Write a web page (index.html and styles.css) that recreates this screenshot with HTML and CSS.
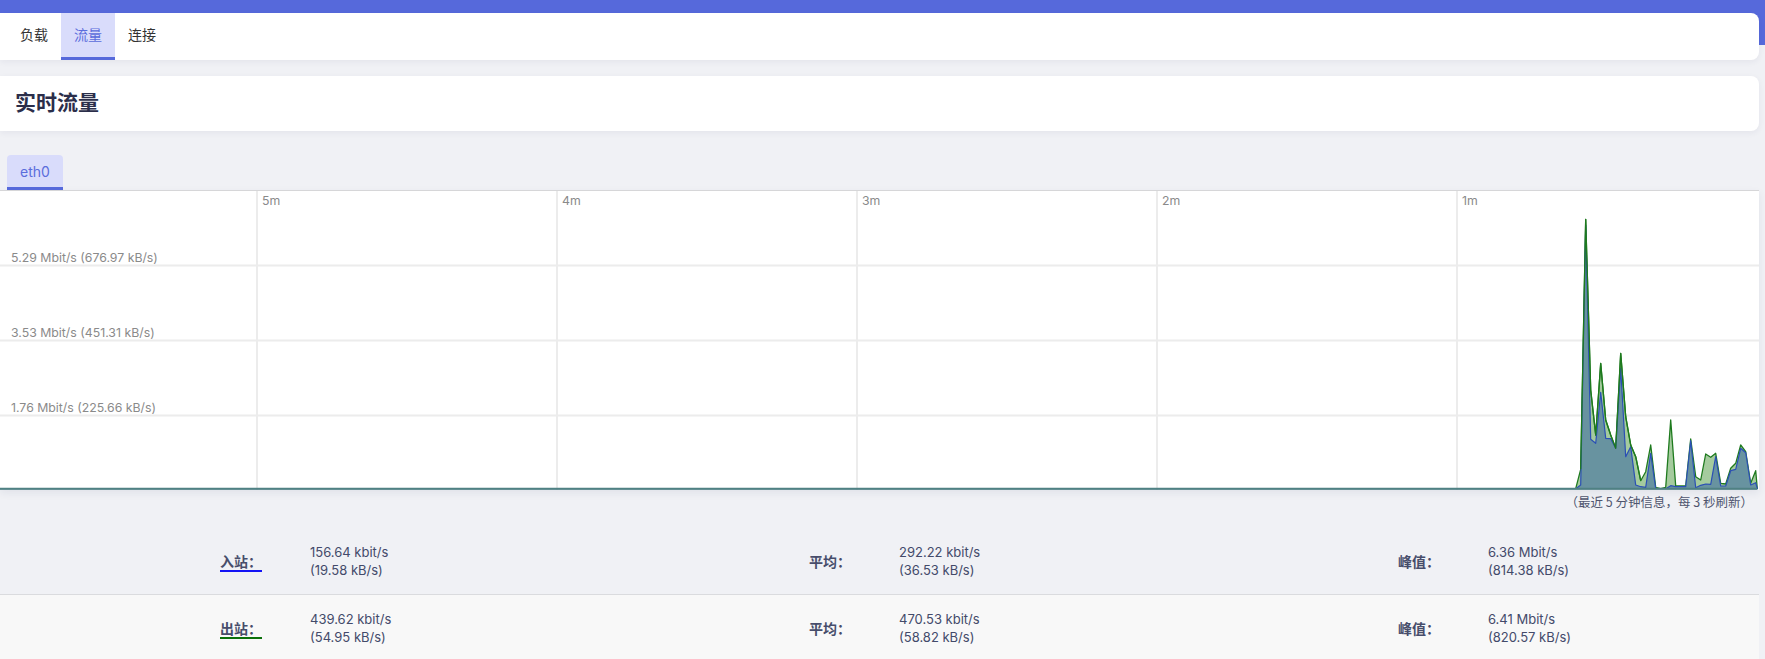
FILE: index.html
```html
<!DOCTYPE html>
<html lang="zh-CN">
<head>
<meta charset="utf-8">
<title>实时流量</title>
<link rel="stylesheet" href="styles.css">
</head>
<body>
<div class="page">
  <nav class="tabs-card">
    <a class="tab">负载</a>
    <a class="tab active">流量</a>
    <a class="tab">连接</a>
  </nav>

  <div class="title-card">
    <h2 class="title">实时流量</h2>
  </div>

  <div class="iface-tabs">
    <span class="iface-tab">eth0</span>
  </div>

  <div class="chart-box">
    <svg class="chart" width="1759" height="299" viewBox="0 0 1759 299" xmlns="http://www.w3.org/2000/svg">
      <g stroke="#ececec" stroke-width="2">
        <line x1="257" y1="0" x2="257" y2="299"/>
        <line x1="557" y1="0" x2="557" y2="299"/>
        <line x1="857" y1="0" x2="857" y2="299"/>
        <line x1="1157" y1="0" x2="1157" y2="299"/>
        <line x1="1457" y1="0" x2="1457" y2="299"/>
        <line x1="0" y1="74.5" x2="1759" y2="74.5"/>
        <line x1="0" y1="149.5" x2="1759" y2="149.5"/>
        <line x1="0" y1="224.5" x2="1759" y2="224.5"/>
      </g>
      <g class="axis">
        <text x="262" y="14">5m</text>
        <text x="562" y="14">4m</text>
        <text x="862" y="14">3m</text>
        <text x="1162" y="14">2m</text>
        <text x="1462" y="14">1m</text>
        <text x="11" y="71">5.29 Mbit/s (676.97 kB/s)</text>
        <text x="11" y="146">3.53 Mbit/s (451.31 kB/s)</text>
        <text x="11" y="221">1.76 Mbit/s (225.66 kB/s)</text>
      </g>
      <polygon fill="#a5cb9e" stroke="#1e7a1e" stroke-width="1.3" stroke-linejoin="round"
        points="0,297.7 1575.7,297.7 1580.7,278.3 1585.7,28.3 1590.7,199 1595.7,244 1600.7,172.3 1605.7,229 1610.7,244 1615.7,257.3 1620.7,162.3 1625.7,225.7 1630.7,254 1635.7,265.7 1640.7,289.7 1645.7,280.7 1650.7,254 1655.7,296.3 1660.7,297.7 1665.7,296.3 1670.7,229 1675.7,295 1680.7,295 1685.7,295 1690.7,248 1695.7,285.7 1700.7,289 1705.7,263 1710.7,266.3 1715.7,262.3 1720.7,292.3 1725.7,293 1730.7,277.3 1735.7,272.3 1740.7,254 1745.7,260.7 1750.7,292.3 1755.7,279.7 1757.3,297.7"/>
      <polygon fill="#6893a0" stroke="#2b4fb5" stroke-width="1.2" stroke-linejoin="round"
        points="0,297.7 1575.7,297.7 1580.7,294 1585.7,34 1590.7,248.3 1595.7,252.3 1600.7,201.3 1605.7,247.3 1610.7,247.7 1615.7,257.3 1620.7,177.3 1625.7,265.7 1630.7,255.7 1635.7,294 1640.7,295.7 1645.7,296.3 1650.7,262.3 1655.7,297.7 1660.7,297.7 1665.7,297.7 1670.7,294.7 1675.7,295.7 1680.7,295.7 1685.7,295.7 1690.7,249.7 1695.7,296.7 1700.7,294.3 1705.7,293 1710.7,293.3 1715.7,265.7 1720.7,295 1725.7,295 1730.7,279.7 1735.7,278.3 1740.7,257.3 1745.7,261.7 1750.7,294 1755.7,291.7 1757.3,297.7"/>
      <polyline fill="none" stroke="#1e7a1e" stroke-width="1.3" stroke-linejoin="round"
        points="1580.7,278.3 1585.7,28.3 1590.7,199 1595.7,244 1600.7,172.3 1605.7,229 1610.7,244 1615.7,257.3 1620.7,162.3 1625.7,225.7 1630.7,254 1635.7,265.7 1640.7,289.7"/>
      <line x1="0" y1="297.8" x2="1757" y2="297.8" stroke="#4f8183" stroke-width="2"/>
    </svg>
  </div>

  <div class="note">（最近 5 分钟信息，每 3 秒刷新）</div>

  <div class="stats">
    <div class="stats-row">
      <div class="cell-label"><span class="lbl lbl-rx">入站：</span></div>
      <div class="cell-value">156.64 kbit/s<br>(19.58 kB/s)</div>
      <div class="cell-label"><span class="lbl">平均：</span></div>
      <div class="cell-value">292.22 kbit/s<br>(36.53 kB/s)</div>
      <div class="cell-label"><span class="lbl">峰值：</span></div>
      <div class="cell-value">6.36 Mbit/s<br>(814.38 kB/s)</div>
    </div>
    <div class="stats-row alt">
      <div class="cell-label"><span class="lbl lbl-tx">出站：</span></div>
      <div class="cell-value">439.62 kbit/s<br>(54.95 kB/s)</div>
      <div class="cell-label"><span class="lbl">平均：</span></div>
      <div class="cell-value">470.53 kbit/s<br>(58.82 kB/s)</div>
      <div class="cell-label"><span class="lbl">峰值：</span></div>
      <div class="cell-value">6.41 Mbit/s<br>(820.57 kB/s)</div>
    </div>
  </div>
</div>
</body>
</html>
```

FILE: styles.css
```css
html, body {
  margin: 0;
  padding: 0;
}

body {
  background: linear-gradient(#5669db 0, #5669db 45px, #f0f1f5 45px);
  background-color: #f0f1f5;
  font-family: Inter, "Noto Sans CJK SC", sans-serif;
  color: #333;
  min-height: 659px;
  overflow: hidden;
}

.page {
  padding: 13px 6px 0 0;
}

.tabs-card {
  display: flex;
  height: 47px;
  padding-left: 7px;
  background: #fff;
  border-radius: 0 8px 8px 0;
  box-shadow: 0 2px 6px rgba(30, 40, 80, 0.06);
}

.tab {
  display: flex;
  align-items: center;
  padding: 0 13px 2px;
  height: 42px;
  border-bottom: 3px solid transparent;
  font-family: "Noto Sans CJK SC", sans-serif;
  font-size: 14px;
  color: #333;
}

.tab.active {
  background: #d9dcfb;
  color: #5b6ddc;
  border-bottom-color: #5669db;
}

.title-card {
  margin-top: 16px;
  height: 55px;
  box-sizing: border-box;
  display: flex;
  align-items: center;
  padding: 0 0 6px 15px;
  background: #fff;
  border-radius: 0 8px 8px 0;
  box-shadow: 0 2px 6px rgba(30, 40, 80, 0.06);
}

.title {
  margin: 0;
  font-family: "Noto Sans CJK SC", sans-serif;
  font-size: 21px;
  line-height: 26px;
  font-weight: 700;
  color: #2b2e4a;
}

.iface-tabs {
  display: flex;
  margin-top: 24px;
  padding-left: 7px;
}

.iface-tab {
  display: flex;
  align-items: center;
  height: 32px;
  padding: 0 13px;
  background: #d9dcfb;
  border-radius: 4px 4px 0 0;
  border-bottom: 3px solid #5669db;
  font-size: 14px;
  color: #5b6ddc;
}

.chart-box {
  background: #fff;
  border-top: 1px solid #d6d6d8;
  height: 299px;
  box-shadow: 0 3px 8px rgba(30, 40, 80, 0.07);
}

.chart {
  display: block;
}

.axis text {
  font-family: Inter, sans-serif;
  font-size: 12.3px;
  fill: #8a8a8a;
}

.note {
  margin-top: 3px;
  padding-right: 6px;
  text-align: right;
  font-family: "Noto Sans CJK SC", sans-serif;
  font-size: 12.5px;
  line-height: 18px;
  color: #4f556e;
}

.stats {
  margin-top: 17px;
}

.stats-row {
  display: grid;
  grid-template-columns: 310px 279px 310px 279px 310px 1fr;
  align-items: center;
  height: 66px;
}

.stats-row.alt {
  background: #f8f8f8;
  border-top: 1px solid #dadbde;
}

.cell-label {
  padding-left: 220px;
}

.lbl {
  display: inline-block;
  line-height: 17px;
  font-family: "Noto Sans CJK SC", sans-serif;
  font-size: 14px;
  font-weight: 700;
  color: #474d6b;
}

.lbl-rx {
  border-bottom: 2px solid #1414f5;
}

.lbl-tx {
  border-bottom: 2px solid #0a700a;
}

.cell-value {
  font-family: Inter, "Noto Sans CJK SC", sans-serif;
  font-size: 13px;
  line-height: 18.5px;
  color: #434a6a;
}
```
